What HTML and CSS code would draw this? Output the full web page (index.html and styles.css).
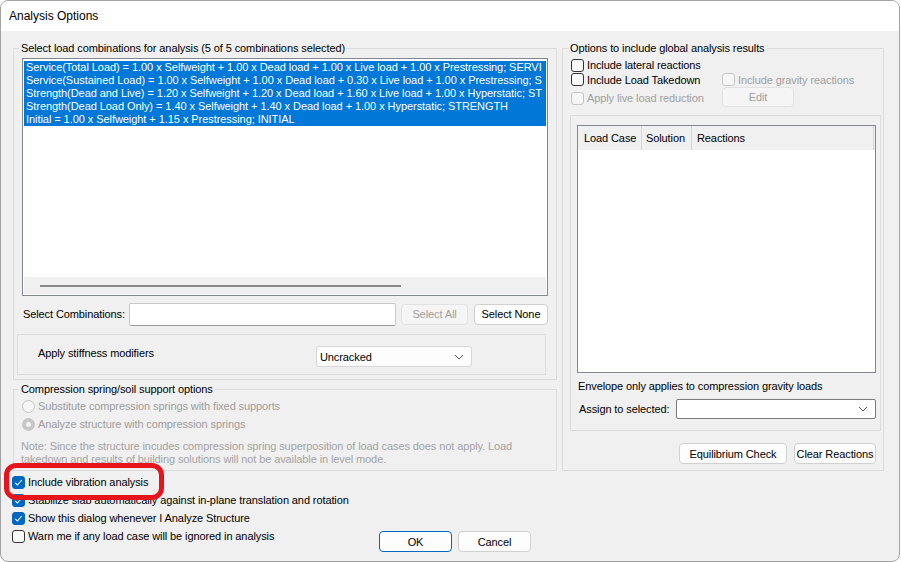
FILE: index.html
```html
<!DOCTYPE html>
<html>
<head>
<meta charset="utf-8">
<title>Analysis Options</title>
<link rel="stylesheet" href="styles.css">
</head>
<body>
<div class="window">
  <div class="titlebar">Analysis Options</div>
  <div class="content">
    <div class="main">
      <div class="leftcol">
        <fieldset class="group combos">
          <legend>Select load combinations for analysis (5 of 5 combinations selected)</legend>
          <div class="listbox">
            <div class="items">
              <div class="item">Service(Total Load) = 1.00 x Selfweight + 1.00 x Dead load + 1.00 x Live load + 1.00 x Prestressing; SERVI</div>
              <div class="item">Service(Sustained Load) = 1.00 x Selfweight + 1.00 x Dead load + 0.30 x Live load + 1.00 x Prestressing; S</div>
              <div class="item">Strength(Dead and Live) = 1.20 x Selfweight + 1.20 x Dead load + 1.60 x Live load + 1.00 x Hyperstatic; ST</div>
              <div class="item">Strength(Dead Load Only) = 1.40 x Selfweight + 1.40 x Dead load + 1.00 x Hyperstatic; STRENGTH</div>
              <div class="item">Initial = 1.00 x Selfweight + 1.15 x Prestressing; INITIAL</div>
            </div>
            <div class="hscroll"><div class="thumb"></div></div>
          </div>
          <div class="select-row">
            <span class="select-label">Select Combinations:</span>
            <div class="textbox"></div>
            <button class="btn btn-disabled btn-selall">Select All</button>
            <button class="btn btn-selnone">Select None</button>
          </div>
          <div class="stiff">
            <span class="stiff-label">Apply stiffness modifiers</span>
            <div class="combo combo-stiff">
              <span>Uncracked</span>
              <svg class="chev" width="10" height="6" viewBox="0 0 10 6"><polyline points="1,1 5,5 9,1" fill="none" stroke="#555" stroke-width="1"/></svg>
            </div>
          </div>
        </fieldset>
        <fieldset class="group compression">
          <legend>Compression spring/soil support options</legend>
          <div class="radio-row first"><span class="radio"></span><span class="lbl">Substitute compression springs with fixed supports</span></div>
          <div class="radio-row"><span class="radio checked"></span><span class="lbl">Analyze structure with compression springs</span></div>
          <p class="note">Note: Since the structure incudes compression spring superposition of load cases does not apply. Load takedown and results of building solutions will not be available in level mode.</p>
        </fieldset>
      </div>
      <fieldset class="group global">
        <legend>Options to include global analysis results</legend>
        <div class="gopts">
          <div class="chk-row r1"><span class="cb"></span><span class="lbl">Include lateral reactions</span></div>
          <div class="chk-row r2"><span class="cb"></span><span class="lbl">Include Load Takedown</span></div>
          <div class="chk-row r2 disabled"><span class="cb"></span><span class="lbl">Include gravity reactions</span></div>
          <div class="chk-row r3 disabled"><span class="cb"></span><span class="lbl">Apply live load reduction</span></div>
          <div class="r3 edit-cell"><button class="btn btn-disabled btn-edit">Edit</button></div>
        </div>
        <div class="reactions-box">
          <div class="table">
            <div class="thead">
              <div class="th th-case">Load Case</div>
              <div class="th th-sol">Solution</div>
              <div class="th th-react">Reactions</div>
            </div>
          </div>
          <div class="envelope">Envelope only applies to compression gravity loads</div>
          <div class="assign-row">
            <span class="assign-label">Assign to selected:</span>
            <div class="combo combo-assign">
              <span></span>
              <svg class="chev" width="10" height="6" viewBox="0 0 10 6"><polyline points="1,1 5,5 9,1" fill="none" stroke="#555" stroke-width="1"/></svg>
            </div>
          </div>
        </div>
        <div class="react-buttons">
          <button class="btn btn-eq">Equilibrium Check</button>
          <button class="btn btn-clear">Clear Reactions</button>
        </div>
      </fieldset>
    </div>
    <div class="bottom">
      <div class="checks">
        <div class="chk-row"><span class="cb on"><svg width="13" height="13" viewBox="0 0 13 13"><polyline points="3.2,6.8 5.4,9 9.8,4" fill="none" stroke="#fff" stroke-width="1.1"/></svg></span><span class="lbl">Include vibration analysis</span></div>
        <div class="chk-row"><span class="cb on"><svg width="13" height="13" viewBox="0 0 13 13"><polyline points="3.2,6.8 5.4,9 9.8,4" fill="none" stroke="#fff" stroke-width="1.1"/></svg></span><span class="lbl">Stabilize slab automatically against in-plane translation and rotation</span></div>
        <div class="chk-row"><span class="cb on"><svg width="13" height="13" viewBox="0 0 13 13"><polyline points="3.2,6.8 5.4,9 9.8,4" fill="none" stroke="#fff" stroke-width="1.1"/></svg></span><span class="lbl">Show this dialog whenever I Analyze Structure</span></div>
        <div class="chk-row"><span class="cb"></span><span class="lbl">Warn me if any load case will be ignored in analysis</span></div>
      </div>
      <div class="dialog-buttons">
        <button class="btn btn-ok">OK</button>
        <button class="btn btn-cancel">Cancel</button>
      </div>
    </div>
  </div>
  <div class="annotation"></div>
</div>
</body>
</html>
```

FILE: styles.css
```css
* { box-sizing: border-box; }
html, body { margin: 0; padding: 0; background: #ffffff; }
body {
  font-family: "Liberation Sans", Arial, sans-serif;
  font-size: 11px;
  letter-spacing: -0.1px;
  color: #000;
}
.window {
  position: relative;
  width: 900px;
  height: 562px;
  border: 1px solid #a3a3a3;
  border-radius: 8px;
  overflow: hidden;
  background: #f0f0f0;
}
.titlebar {
  height: 30px;
  background: #fff;
  font-size: 12px;
  letter-spacing: 0;
  line-height: 30px;
  padding-left: 8px;
}
.content { padding: 11px 0 0 12px; }
.main { display: flex; gap: 5px; align-items: stretch; }
.leftcol { width: 544px; display: flex; flex-direction: column; }

fieldset.group {
  margin: 0;
  padding: 0;
  border: 1px solid #dcdcdc;
  min-width: 0;
}
fieldset.group > legend {
  margin-left: 5px;
  padding: 0 2px;
  line-height: 13px;
  font-size: 11px;
}

/* combos */
.combos { padding-bottom: 4px !important; }
.listbox {
  margin: 3px 0 0 8px;
  width: 526px;
  height: 238px;
  border: 1px solid #828790;
  background: #fff;
  padding: 1px;
  display: flex;
  flex-direction: column;
}
.items { flex: 1; padding-top: 1px; overflow: hidden; }
.item {
  height: 13px;
  line-height: 13px;
  background: #0078d7;
  color: #fff;
  white-space: nowrap;
  overflow: hidden;
  padding-left: 2px;
  letter-spacing: -0.06px;
}
.hscroll {
  height: 17px;
  background: #f0f0f0;
  display: flex;
  align-items: center;
}
.thumb {
  margin-left: 16px;
  width: 361px;
  height: 2px;
  background: #888;
}
.select-row {
  display: flex;
  align-items: center;
  margin: 6px 0 0 9px;
  height: 24px;
}
.select-label { width: 106px; }
.textbox {
  width: 267px;
  height: 23px;
  background: #fff;
  border: 1px solid #c8c8c8;
  border-bottom-color: #9a9a9a;
  border-radius: 2px;
}
.btn {
  font-family: "Liberation Sans", Arial, sans-serif;
  font-size: 11px;
  letter-spacing: -0.1px;
  color: #000;
  background: #fdfdfd;
  border: 1px solid #d0d0d0;
  border-radius: 4px;
  padding: 0;
  height: 21px;
  text-align: center;
}
.btn-disabled { color: #a0a0a0; background: #f5f5f5; border-color: #e2e2e2; }
.btn-selall { width: 67px; margin-left: 5px; }
.btn-selnone { width: 74px; margin-left: 6px; }

.stiff {
  margin: 8px 0 0 3px;
  width: 529px;
  height: 41px;
  border: 1px solid #dcdcdc;
  display: flex;
  align-items: flex-start;
  padding-left: 20px;
}
.stiff-label { width: 278px; margin-top: 12px; line-height: 13px; }
.combo {
  display: flex;
  align-items: center;
  justify-content: space-between;
  background: #fdfdfd;
  border: 1px solid #d6d6d6;
  border-radius: 3px;
  height: 21px;
  padding: 0 7px 0 3px;
}
.combo-stiff { width: 156px; margin-top: 11px; }
.chev { display: block; }

/* compression */
.compression { margin-top: 3px !important; padding-bottom: 4px !important; }
.radio-row {
  height: 18px;
  display: flex;
  align-items: center;
  margin-left: 8px;
  color: #9d9d9d;
}
.radio-row.first { margin-top: 1px; }
.radio {
  width: 13px;
  height: 13px;
  border: 1px solid #c4c4c4;
  border-radius: 50%;
  background: #f6f6f6;
  position: relative;
}
.radio.checked {
  background: #c6c6c6;
  border-color: #c6c6c6;
}
.radio.checked::after {
  content: "";
  position: absolute;
  left: 3px; top: 3px;
  width: 5px; height: 5px;
  border-radius: 50%;
  background: #f3f3f3;
}
.radio-row .lbl { margin-left: 3px; }
.note {
  margin: 7px 0 0 7px;
  width: 522px;
  line-height: 13px;
  color: #a3a3a3;
}

/* checkboxes */
.chk-row { display: flex; align-items: center; height: 18px; white-space: nowrap; }
.cb {
  width: 13px;
  height: 13px;
  border: 1px solid #333;
  border-radius: 3px;
  background: #fbfbfb;
  flex: none;
}
.cb svg { display: block; margin: -1px; }
.cb.on { background: #0067c0; border-color: #0067c0; }
.chk-row .lbl { margin-left: 3px; }
.chk-row.disabled { color: #a0a0a0; }
.chk-row.disabled .cb { border-color: #c6c6c6; background: #f6f6f6; }

/* global */
.global { width: 322px; }
.gopts {
  margin: 3px 0 0 8px;
  display: grid;
  grid-template-columns: 151px 80px;
  grid-template-rows: 14px 15px 20px;
}
.gopts .r1 { grid-column: 1 / 3; height: 14px; }
.gopts .r2 { height: 15px; }
.gopts .r3 { height: 20px; }
.gopts .chk-row.r3 { margin-top: 1px; }
.btn-edit { width: 72px; height: 20px; }
.reactions-box {
  margin: 8px 0 0 7px;
  width: 311px;
  border: 1px solid #dcdcdc;
  padding: 9px 0 11px 6px;
}
.table {
  width: 299px;
  height: 248px;
  border: 1px solid #828790;
  background: #fff;
}
.thead {
  display: flex;
  height: 24px;
  background: #f0f0f0;
}
.th {
  line-height: 24px;
  border-right: 1px solid #d5d5d5;
  white-space: nowrap;
}
.th-case { width: 64px; padding-left: 6px; }
.th-sol { width: 50px; padding-left: 4px; }
.th-react { width: 182px; padding-left: 5px; }
.envelope { margin-top: 7px; margin-left: 1px; line-height: 13px; }
.assign-row { display: flex; align-items: center; margin-top: 6px; height: 20px; }
.assign-label { width: 97px; margin-left: 2px; }
.combo-assign { width: 200px; height: 20px; background: #fff; border-color: #7a7a7a; border-radius: 2px; }
.react-buttons {
  display: flex;
  justify-content: flex-end;
  gap: 7px;
  margin-top: 12px;
  padding-right: 7px;
}
.btn-eq { width: 108px; }
.btn-clear { width: 82px; }

/* bottom */
.bottom { display: flex; margin-top: 2px; }
.checks { width: 367px; margin-left: -1px; }
.dialog-buttons { display: flex; gap: 6px; margin-top: 58px; }
.btn-ok { width: 73px; border-color: #0067c0; }
.btn-cancel { width: 73px; }

.annotation {
  position: absolute;
  left: 3px;
  top: 462px;
  width: 160px;
  height: 37px;
  border: 5px solid #e8141c;
  border-radius: 12px;
}
```
